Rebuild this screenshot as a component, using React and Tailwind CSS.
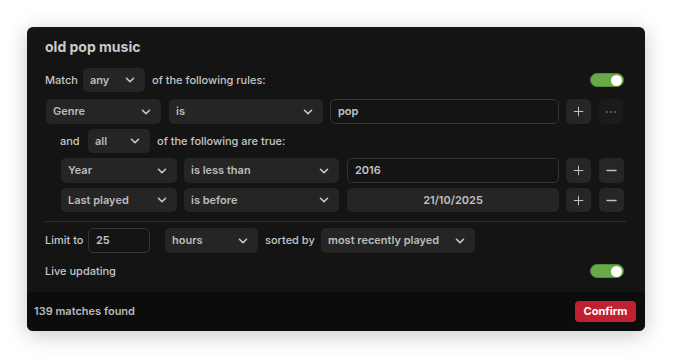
import { ChevronDown, Plus, Minus } from 'lucide-react';

const font = { fontFamily: 'Inter, "Liberation Sans", sans-serif' };

function Select({ label, w }) {
  return (
    <div className={`flex h-full items-center justify-between rounded-[5px] bg-[#252525] pl-[7px] pr-[8px] text-[11px] font-semibold text-[#bcbcbc] ${w}`}>
      <span>{label}</span>
      <ChevronDown size={14} strokeWidth={2.8} className="text-[#c8c8c8]" />
    </div>
  );
}

function Field({ value, w }) {
  return (
    <div className={`flex h-full items-center rounded-[5px] border border-[#343434] bg-[#141414] pl-[7px] text-[11px] font-semibold text-[#c4c4c4] ${w}`}>
      {value}
    </div>
  );
}

function IconBtn({ kind }) {
  if (kind === 'more') {
    return (
      <div className="flex h-full w-[24px] items-center justify-center gap-[2px] rounded-[5px] bg-[#1b1b1b]">
        <span className="h-[2px] w-[2px] rounded-full bg-[#6a6a6a]" />
        <span className="h-[2px] w-[2px] rounded-full bg-[#6a6a6a]" />
        <span className="h-[2px] w-[2px] rounded-full bg-[#6a6a6a]" />
      </div>
    );
  }
  return (
    <div className="flex h-full w-[25px] items-center justify-center rounded-[5px] bg-[#262626] text-[#c0c0c0]">
      {kind === 'plus' ? <Plus size={15} strokeWidth={1.6} /> : <Minus size={15} strokeWidth={2.6} />}
    </div>
  );
}

function Toggle() {
  return (
    <div className="flex h-[14px] w-[34px] items-center justify-end rounded-full border border-[#4f8a37] bg-[#68a94a] pr-[1px]">
      <span className="h-[11px] w-[11px] rounded-full bg-white" />
    </div>
  );
}

export default function App() {
  return (
    <div className="min-h-[364px] bg-white p-[27px]" style={font}>
      <div className="w-[618px] overflow-hidden rounded-[6px] bg-[#141414] shadow-[0_4px_22px_rgba(0,0,0,0.22)]">
        <div className="pl-[18px] pr-[21px] pt-[10px]">
          <div className="h-5 text-[14px] font-bold leading-5 text-[#c9c9c9]">old pop music</div>

          <div className="mt-[11px] flex h-6 items-center text-[11px] font-medium text-[#c6c6c6]">
            <span className="w-[38px]">Match</span>
            <Select label="any" w="w-[62px]" />
            <span className="ml-[7px]">of the following rules:</span>
            <div className="ml-auto"><Toggle /></div>
          </div>

          <div className="mt-[7px] flex h-[25px] gap-[7px] pl-[1px]">
            <Select label="Genre" w="w-[115px]" />
            <div className="ml-[1px]"><Select label="is" w="w-[154px]" /></div>
            <Field value="pop" w="w-[229px]" />
            <IconBtn kind="plus" />
            <div className="ml-[1px]"><IconBtn kind="more" /></div>
          </div>

          <div className="mt-[5px] flex h-6 items-center pl-[15px] text-[11px] font-medium text-[#c6c6c6]">
            <span className="w-[28px]">and</span>
            <Select label="all" w="w-[62px]" />
            <span className="ml-[7px]">of the following are true:</span>
          </div>

          <div className="mt-[5px] flex h-[25px] gap-[7px] pl-[16px]">
            <Select label="Year" w="w-[116px]" />
            <Select label="is less than" w="w-[155px]" />
            <div className="ml-[1px]"><Field value="2016" w="w-[212px]" /></div>
            <IconBtn kind="plus" />
            <div className="ml-[1px]"><IconBtn kind="minus" /></div>
          </div>

          <div className="mt-[5px] flex h-[24px] gap-[7px] pl-[16px]">
            <Select label="Last played" w="w-[116px]" />
            <Select label="is before" w="w-[155px]" />
            <div className="ml-[1px] flex h-full w-[212px] items-center justify-center rounded-[5px] bg-[#252525] text-[11px] font-semibold text-[#c0c0c0]">
              21/10/2025
            </div>
            <IconBtn kind="plus" />
            <div className="ml-[1px]"><IconBtn kind="minus" /></div>
          </div>

          <div className="mr-[-2px] mt-[9px] h-px bg-[#2e2e2e]" />

          <div className="mt-[6px] flex h-[25px] items-center text-[11px] font-medium text-[#c6c6c6]">
            <span className="w-[43px]">Limit to</span>
            <Field value="25" w="w-[62px]" />
            <div className="ml-[15px] h-full"><Select label="hours" w="w-[93px]" /></div>
            <span className="ml-[7px] w-[56px]">sorted by</span>
            <div className="h-full"><Select label="most recently played" w="w-[154px]" /></div>
          </div>

          <div className="mt-[11px] flex h-[14px] items-center text-[11px] font-medium text-[#c6c6c6]">
            <span>Live updating</span>
            <div className="ml-auto"><Toggle /></div>
          </div>
        </div>

        <div className="mt-[14px] flex h-[39px] items-center justify-between bg-[#0c0c0c] pl-[7px] pr-[9px]">
          <span className="text-[11px] font-semibold text-[#b9b9b9]">139 matches found</span>
          <div className="flex h-[21px] w-[61px] items-center justify-center rounded-[4px] bg-[#c0212f] text-[11px] font-bold text-white">
            Confirm
          </div>
        </div>
      </div>
    </div>
  );
}
